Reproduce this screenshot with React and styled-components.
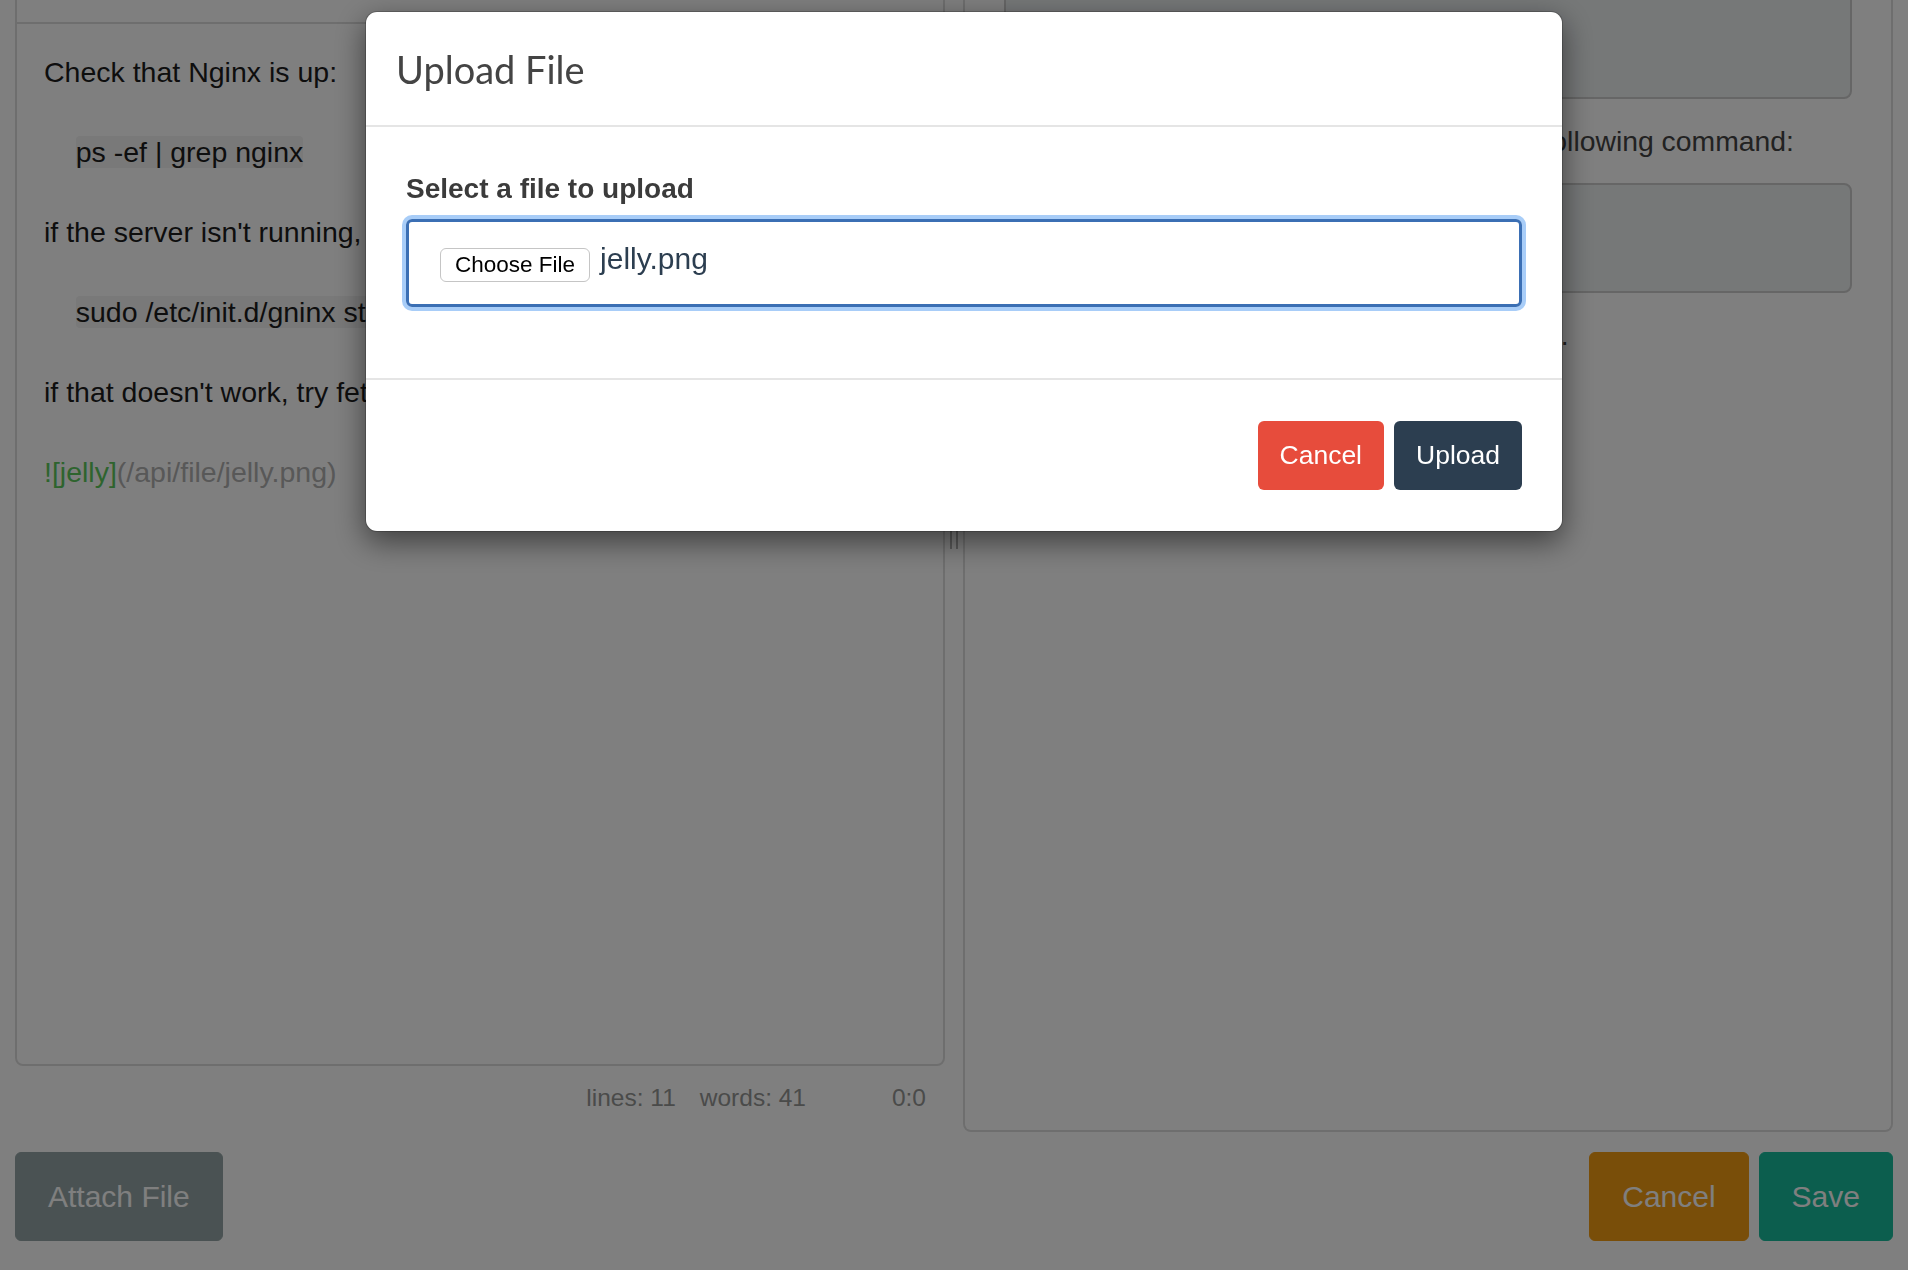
import React from 'react'
import styled, { createGlobalStyle } from 'styled-components'

const GlobalStyle = createGlobalStyle`
  * { box-sizing: border-box; }
  html, body { margin: 0; padding: 0; background: #fff; }
  body {
    font-family: "Liberation Sans", Helvetica, Arial, sans-serif;
    color: #222;
  }
`

const colors = {
    default: '#95a5a6',
    warning: '#f39c12',
    success: '#18bc9c',
    danger: '#e74c3c',
    primary: '#2c3e50',
}

// markdown source shown in the editor, one entry per line
const sourceLines = [
    { text: 'Check that Nginx is up:' },
    { text: '' },
    { code: 'ps -ef | grep nginx' },
    { text: '' },
    { text: "if the server isn't running, restart it with the following command:" },
    { text: '' },
    { code: 'sudo /etc/init.d/gninx start' },
    { text: '' },
    { text: "if that doesn't work, try fetching a new config." },
    { text: '' },
    { image: ['![jelly]', '(/api/file/jelly.png)'] },
]

const App = () => {
    const previewRef = React.useRef(null)

    // the preview pane sits scrolled a little way down
    React.useLayoutEffect(() => {
        if (previewRef.current) previewRef.current.scrollTop = 115
    }, [])

    return (
        <>
            <GlobalStyle />
            <Page>
                <Columns>
                    <EditorColumn>
                        <ToolbarStrip />
                        <Editor>
                            {sourceLines.map((line, i) => (
                                <Line key={i}>
                                    {line.code && <>{'    '}<CodeSpan>{line.code}</CodeSpan></>}
                                    {line.image && <><AltText>{line.image[0]}</AltText><UrlText>{line.image[1]}</UrlText></>}
                                    {line.text}
                                </Line>
                            ))}
                        </Editor>
                        <StatusBar>
                            <span>lines: 11</span>
                            <span>words: 41</span>
                            <Cursor>0:0</Cursor>
                        </StatusBar>
                    </EditorColumn>

                    <Splitter>
                        <Grip />
                        <Grip />
                    </Splitter>

                    <Preview ref={previewRef}>
                        <PreviewBody>
                            <P>Check that Nginx is up:</P>
                            <Pre>ps -ef | grep nginx</Pre>
                            <P>if the server isn't running, restart it with the following command:</P>
                            <Pre>sudo /etc/init.d/gninx start</Pre>
                            <P>if that doesn't work, try fetching a new config.</P>
                        </PreviewBody>
                    </Preview>
                </Columns>

                <ActionRow>
                    <Btn $bg={colors.default}>Attach File</Btn>
                    <BtnGroup>
                        <Btn $bg={colors.warning}>Cancel</Btn>
                        <Btn $bg={colors.success}>Save</Btn>
                    </BtnGroup>
                </ActionRow>
            </Page>

            <Backdrop />
            <ModalLayer>
                <Dialog>
                    <ModalHeader>
                        <ModalTitle>Upload File</ModalTitle>
                    </ModalHeader>
                    <ModalBody>
                        <FieldLabel>Select a file to upload</FieldLabel>
                        <FileField>
                            <ChooseBtn>Choose File</ChooseBtn>
                            <FileName>jelly.png</FileName>
                        </FileField>
                    </ModalBody>
                    <ModalFooter>
                        <SmallBtn $bg={colors.danger}>Cancel</SmallBtn>
                        <SmallBtn $bg={colors.primary}>Upload</SmallBtn>
                    </ModalFooter>
                </Dialog>
            </ModalLayer>
        </>
    )
}

const Page = styled.div`
    padding: 0 15px;
`
const Columns = styled.div`
    display: grid;
    grid-template-columns: 1fr 18px 1fr;
    align-items: start;
`
const EditorColumn = styled.div`
    display: flex;
    flex-direction: column;
`
const ToolbarStrip = styled.div`
    height: 22px;
    border-left: 2px solid #ddd;
    border-right: 2px solid #ddd;
`
const Editor = styled.div`
    height: 1044px;
    border: 2px solid #ddd;
    border-radius: 0 0 8px 8px;
    padding: 28px 27px;
    font-size: 28.5px;
    line-height: 40px;
    color: #1c1c1c;
    overflow: hidden;
`
const Line = styled.div`
    height: 40px;
    white-space: pre;
`
const CodeSpan = styled.span`
    background: rgba(0, 0, 0, 0.05);
    border-radius: 4px;
`
const AltText = styled.span`
    color: #5cc85c;
`
const UrlText = styled.span`
    color: #b0b0b0;
`
const StatusBar = styled.div`
    display: flex;
    justify-content: flex-end;
    gap: 24px;
    padding: 18px 19px 14px 20px;
    font-size: 24.5px;
    line-height: 28px;
    color: #959694;
`
const Cursor = styled.span`
    min-width: 96px;
    text-align: right;
`
const Splitter = styled.div`
    height: 1058px;
    display: flex;
    justify-content: center;
    align-items: center;
    gap: 4px;
`
const Grip = styled.span`
    width: 2px;
    height: 40px;
    background: #b4b4b4;
`
const Preview = styled.div`
    height: 1132px;
    border: 2px solid #ddd;
    border-top: none;
    border-radius: 0 0 8px 8px;
    overflow: hidden;
    color: #444;
    font-size: 28.35px;
    line-height: 40px;
`
const PreviewBody = styled.div`
    padding: 40px 39px;
    min-height: 1400px;
`
const P = styled.p`
    margin: 0 0 22px;
    padding-top: 2px;
`
const Pre = styled.pre`
    margin: 0 0 20px;
    padding: 33px 19px;
    background: #ecf0f1;
    border: 2px solid #ccc;
    border-radius: 8px;
    font-family: "Liberation Mono", monospace;
    font-size: 26px;
    line-height: 40px;
    color: #7b8a8b;
`
const ActionRow = styled.div`
    display: flex;
    justify-content: space-between;
    margin-top: 20px;
`
const BtnGroup = styled.div`
    display: flex;
    gap: 10px;
`
const Btn = styled.button`
    height: 89px;
    padding: 0 32px;
    border: 1px solid ${p => p.$bg};
    background: ${p => p.$bg};
    color: #fff;
    font-family: "Liberation Sans", Helvetica, Arial, sans-serif;
    font-size: 30px;
    border-radius: 6px;
`
const Backdrop = styled.div`
    position: fixed;
    inset: 0;
    background: rgba(0, 0, 0, 0.5);
    z-index: 1040;
`
const ModalLayer = styled.div`
    position: fixed;
    inset: 0;
    z-index: 1050;
    display: flex;
    justify-content: center;
    align-items: flex-start;
    padding: 11px 0 0 20px;
`
const Dialog = styled.div`
    width: 1198px;
    background: #fff;
    background-clip: padding-box;
    border: 1px solid rgba(0, 0, 0, 0.2);
    border-radius: 12px;
    box-shadow: 0 10px 30px rgba(0, 0, 0, 0.5);
`
const ModalHeader = styled.div`
    padding: 37px 30px 36px;
    border-bottom: 2px solid #e5e5e5;
`
const ModalTitle = styled.h4`
    margin: 0;
    font-family: Lato, "Liberation Sans", sans-serif;
    font-weight: 400;
    font-size: 38px;
    line-height: 40px;
    color: #444;
`
const ModalBody = styled.div`
    padding: 42px 40px 71px;
`
const FieldLabel = styled.label`
    display: block;
    margin-bottom: 10px;
    font-size: 28px;
    line-height: 40px;
    font-weight: 700;
    color: #3b3b3b;
`
const FileField = styled.div`
    display: flex;
    align-items: center;
    gap: 10px;
    height: 88px;
    padding: 0 31px;
    border: 3px solid #3b6fb4;
    border-radius: 6px;
    box-shadow: 0 0 0 4px #a8cdf8;
`
const ChooseBtn = styled.span`
    display: inline-flex;
    align-items: center;
    height: 34px;
    margin-top: 4px;
    padding: 0 14px;
    background: #fff;
    border: 1px solid #c5c5c5;
    border-radius: 6px;
    font-size: 22.5px;
    color: #000;
`
const FileName = styled.span`
    margin-top: -8px;
    font-size: 30px;
    color: #2c3e50;
`
const ModalFooter = styled.div`
    display: flex;
    justify-content: flex-end;
    gap: 10px;
    padding: 41px 40px;
    border-top: 2px solid #e5e5e5;
`
const SmallBtn = styled.button`
    height: 69px;
    padding: 0 22px;
    border: none;
    border-radius: 6px;
    background: ${p => p.$bg};
    color: #fff;
    font-family: "Liberation Sans", Helvetica, Arial, sans-serif;
    font-size: 26.5px;
`

export default App
